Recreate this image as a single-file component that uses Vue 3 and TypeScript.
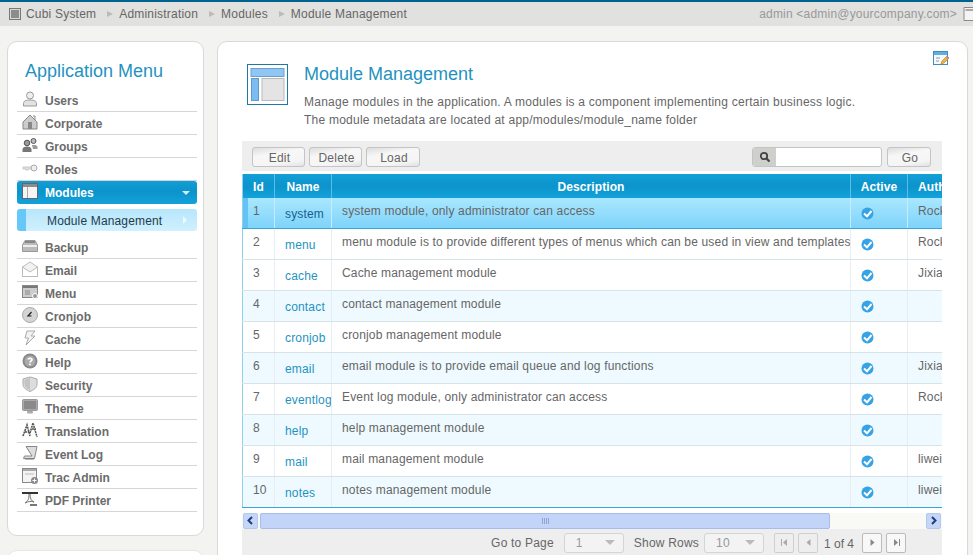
<template>
  <div class="page">
    <div class="topbar">
      <div class="crumbs">
        <svg class="crumb-icon" width="12" height="12" viewBox="0 0 12 12"><rect x="0.5" y="0.5" width="11" height="11" fill="#d8d8d8" stroke="#777" /><rect x="2" y="2" width="8" height="8" fill="#8c8c8c" /></svg>
        <template v-for="(c, i) in crumbs" :key="c">
          <span class="crumb-arrow" v-if="i > 0"></span>
          <span>{{ c }}</span>
        </template>
      </div>
      <div class="user">
        <span>admin &lt;admin@yourcompany.com&gt;</span>
        <svg class="user-icon" width="16" height="16" viewBox="0 0 16 16"><path d="M1 1.5h14v9l-4 4H1z" fill="#f4f4f4" stroke="#8a8a8a" /><path d="M2.500 4h11" stroke="#aaa" stroke-width="2" /><path d="M11 14l4-4" stroke="#666" /></svg>
      </div>
    </div>

    <div class="main">
      <aside class="side">
        <div class="card menu-card">
          <h2 class="menu-title">Application Menu</h2>
          <ul class="menu">
            <template v-for="m in menu" :key="m.label">
              <li class="menu-item" :class="{ active: m.active }">
                <svg class="menu-icon" width="16" height="16" viewBox="0 0 16 16" v-html="icons[m.icon]"></svg>
                <span>{{ m.label }}</span>
                <i class="caret" v-if="m.active"></i>
              </li>
              <li class="sub-item" v-if="m.active">
                <span>Module Management</span>
                <i class="sub-caret"></i>
              </li>
            </template>
          </ul>
        </div>
        <div class="card next-card"></div>
      </aside>

      <section class="card content">
        <svg class="edit-icon" width="16" height="16" viewBox="0 0 16 16">
          <rect x="0.500" y="0.500" width="14" height="13" fill="#f3f9fd" stroke="#3f8fbd" />
          <rect x="1" y="1" width="13" height="3" fill="#5fb0de" />
          <path d="M3 7h4M3 10h3" stroke="#8a9aa5" />
          <path d="M8 13l1-3 5-5 2 2-5 5z" fill="#f2b33d" stroke="#b97a18" stroke-width="0.600" />
          <path d="M13 6l2 2 1-1.500-1.500-1.500z" fill="#b07ac8" />
        </svg>

        <header class="head">
          <svg class="head-icon" width="41" height="41" viewBox="0 0 41 41">
            <rect x="0.500" y="0.500" width="40" height="40" fill="#fff" stroke="#1f79a6" />
            <rect x="4" y="4.500" width="33" height="8" fill="#8fc6f3" stroke="#6d9fc7" />
            <rect x="4.500" y="14.500" width="7" height="22" fill="#7dbcf2" stroke="#5f9ccd" />
            <rect x="15" y="14.500" width="22" height="22" fill="#e4e4e4" stroke="#b9b9b9" />
          </svg>
          <div>
            <h1 class="title">Module Management</h1>
            <p class="desc">Manage modules in the application. A modules is a component implementing certain business logic.<br />The module metadata are located at app/modules/module_name folder</p>
          </div>
        </header>

        <div class="grid-wrap">
          <div class="toolbar">
            <div class="btns">
              <button class="btn" v-for="b in ['Edit', 'Delete', 'Load']" :key="b">{{ b }}</button>
            </div>
            <div class="search">
              <div class="search-box">
                <span class="search-ico">
                  <svg width="12" height="12" viewBox="0 0 12 12"><circle cx="5" cy="5" r="3.200" fill="none" stroke="#444" stroke-width="1.800" /><path d="M7.500 7.500l3 3" stroke="#444" stroke-width="2.200" /></svg>
                </span>
              </div>
              <button class="btn go">Go</button>
            </div>
          </div>

          <table class="grid">
            <colgroup>
              <col style="width: 32px" /><col style="width: 57px" /><col style="width: 519px" /><col style="width: 57px" /><col style="width: 100px" />
            </colgroup>
            <thead>
              <tr>
                <th>Id</th><th>Name</th><th>Description</th><th>Active</th><th class="author-h">Author</th>
              </tr>
            </thead>
            <tbody>
              <tr v-for="r in rows" :key="r.id" :class="{ selected: r.id === 1, tint: r.tint }">
                <td>{{ r.id }}</td>
                <td class="name">{{ r.name }}</td>
                <td>{{ r.desc }}</td>
                <td class="active-cell">
                  <svg width="13" height="13" viewBox="0 0 13 13"><circle cx="6.500" cy="6.500" r="6" fill="#36a3e6" /><path d="M3 6.500l3 2.800 4.500-5.300" fill="none" stroke="#fff" stroke-width="2" /></svg>
                </td>
                <td>{{ r.author }}</td>
              </tr>
            </tbody>
          </table>

          <div class="hscroll">
            <span class="sb-btn"><svg width="9" height="9" viewBox="0 0 9 9"><path d="M6 1L2.500 4.500 6 8" fill="none" stroke="#1e3f7a" stroke-width="2" /></svg></span>
            <span class="sb-thumb"><i class="grip"></i></span>
            <span class="sb-btn"><svg width="9" height="9" viewBox="0 0 9 9"><path d="M3 1l3.500 3.500L3 8" fill="none" stroke="#1e3f7a" stroke-width="2" /></svg></span>
          </div>

          <div class="pager">
            <span class="lbl">Go to Page</span>
            <span class="sel"><b>1</b><i class="tri"></i></span>
            <span class="lbl rows-lbl">Show Rows</span>
            <span class="sel"><b>10</b><i class="tri"></i></span>
            <span class="pbtns">
              <button class="pb"><svg width="9" height="9" viewBox="0 0 9 9"><path d="M1.500 1v7" stroke="#aaa" /><path d="M7 1v7L3 4.500z" fill="#aaa" /></svg></button>
              <button class="pb"><svg width="9" height="9" viewBox="0 0 9 9"><path d="M6.500 1v7L2.500 4.500z" fill="#aaa" /></svg></button>
              <span class="of">1 of 4</span>
              <button class="pb on"><svg width="9" height="9" viewBox="0 0 9 9"><path d="M2.500 1v7l4-3.500z" fill="#888" /></svg></button>
              <button class="pb on"><svg width="9" height="9" viewBox="0 0 9 9"><path d="M2 1v7l4-3.500z" fill="#888" /><path d="M7.500 1v7" stroke="#888" /></svg></button>
            </span>
          </div>
        </div>
      </section>
    </div>
  </div>
</template>

<script setup lang="ts">
interface MenuItem {
  label: string
  icon: string
  active?: boolean
}

interface Row {
  id: number
  name: string
  desc: string
  author: string
  tint?: boolean
}

const crumbs = ['Cubi System', 'Administration', 'Modules', 'Module Management']

const menu: MenuItem[] = [
  { label: 'Users', icon: 'users' },
  { label: 'Corporate', icon: 'corporate' },
  { label: 'Groups', icon: 'groups' },
  { label: 'Roles', icon: 'roles' },
  { label: 'Modules', icon: 'modules', active: true },
  { label: 'Backup', icon: 'backup' },
  { label: 'Email', icon: 'email' },
  { label: 'Menu', icon: 'menu' },
  { label: 'Cronjob', icon: 'cronjob' },
  { label: 'Cache', icon: 'cache' },
  { label: 'Help', icon: 'help' },
  { label: 'Security', icon: 'security' },
  { label: 'Theme', icon: 'theme' },
  { label: 'Translation', icon: 'translation' },
  { label: 'Event Log', icon: 'eventlog' },
  { label: 'Trac Admin', icon: 'trac' },
  { label: 'PDF Printer', icon: 'pdf' },
]

// grey 16px glyphs for the side menu
const icons: Record<string, string> = {
  users: '<circle cx="8" cy="4.500" r="3.500" fill="#eee" stroke="#999"/><path d="M1.500 15v-2.500C1.500 10 4 9 8 9s6.500 1 6.500 3.500V15z" fill="#e2e2e2" stroke="#999"/>',
  corporate: '<path d="M8 1L1 8v7h14V8z" fill="#ccc" stroke="#888"/><rect x="6" y="8" width="4" height="7" fill="#888"/><path d="M11 2h2v4" fill="none" stroke="#888"/>',
  groups: '<circle cx="5" cy="6" r="2.800" fill="#999" stroke="#555"/><circle cx="11.500" cy="4" r="2.500" fill="#bbb" stroke="#555"/><path d="M0.500 15v-2.500C0.500 10.500 2.500 9.500 5 9.500s4.500 1 4.500 3V15z" fill="#777"/><path d="M10 8h3c1.500 0 2.500 1 2.500 2.500V12H11z" fill="#999"/>',
  roles: '<circle cx="12" cy="8" r="3" fill="#eee" stroke="#aaa"/><path d="M1 7h8v2H6v1H4V9H1z" fill="#e4e4e4" stroke="#bbb" stroke-width="0.800"/>',
  modules: '<rect x="0.500" y="0.500" width="15" height="15" fill="#f5f5f5" stroke="#666"/><rect x="1" y="1" width="14" height="3" fill="#8c8c8c"/><path d="M5.500 4v11" stroke="#aaa"/>',
  backup: '<path d="M0.500 7L3 2.500h10L15.500 7v6.500h-15z" fill="#bbb" stroke="#999"/><rect x="1" y="7" width="14" height="2" fill="#eee"/><rect x="3" y="3" width="10" height="2" fill="#888"/>',
  email: '<rect x="0.500" y="6" width="15" height="9.500" fill="#fff" stroke="#bbb"/><path d="M0.500 6L8 1l7.500 5L8 11z" fill="#f2f2f2" stroke="#bbb"/>',
  menu: '<rect x="0.500" y="1.500" width="15" height="12" fill="#ccc" stroke="#888"/><rect x="1" y="2" width="14" height="2" fill="#777"/><rect x="3" y="6" width="5" height="5" fill="#aaa"/><circle cx="13" cy="12" r="2.500" fill="#999" stroke="#fff"/>',
  cronjob: '<circle cx="8" cy="8" r="7.500" fill="#d4d4d4" stroke="#aaa"/><path d="M9.500 5L6 9h3.500" fill="none" stroke="#222" stroke-width="1.200"/>',
  cache: '<path d="M5 1h8l-4 5h4l-9 9 2.500-7H3z" fill="#f2f2f2" stroke="#aaa"/>',
  help: '<circle cx="8" cy="8" r="7.500" fill="#888"/><circle cx="8" cy="8" r="5.500" fill="#aaa"/><path d="M6 6.500C6 5 10 5 10 6.800 10 8 8 8 8 9.500" fill="none" stroke="#fff" stroke-width="1.600"/><rect x="7.200" y="10.600" width="1.600" height="1.600" fill="#fff"/>',
  security: '<path d="M8 1l7 2v5c0 4-3.500 6-7 7.500C4.500 14 1 12 1 8V3z" fill="#ddd" stroke="#aaa"/><path d="M8 2v12C5 13 2.500 11 2.500 8V4z" fill="#c4c4c4"/>',
  theme: '<rect x="0.500" y="0.500" width="15" height="11" rx="1" fill="#aaa" stroke="#999"/><rect x="2" y="2" width="12" height="8" fill="#8a8a8a"/><rect x="5" y="12" width="6" height="2.500" rx="1" fill="#aaa"/>',
  translation: '<path d="M1 14L5 3l3 11M3 10h4M8 11l3-10 4 14M10 7h4" fill="none" stroke="#555" stroke-width="1.600" stroke-dasharray="2 0.700"/>',
  eventlog: '<path d="M4 1.500h11l-2.500 12H1.500L2.500 11H10z" fill="#ddd" stroke="#888"/><path d="M3 14h9" stroke="#777"/>',
  trac: '<rect x="0.500" y="0.500" width="14" height="14" fill="#f4f4f4" stroke="#888"/><rect x="1" y="1" width="13" height="2" fill="#aaa"/><path d="M3 6h9" stroke="#bbb"/><circle cx="12.500" cy="12.500" r="3.500" fill="#888"/><path d="M10.500 12.500h4M12.500 10.500v4" stroke="#fff"/>',
  pdf: '<rect x="0" y="1" width="16" height="2" fill="#333"/><rect x="3" y="3" width="10" height="11" fill="#fafafa"/><path d="M7 3c0 5-1 7-4 9 4-2 6-2 9-1-3-1-4-4-4-8" fill="none" stroke="#777"/><rect x="8" y="13" width="7" height="2" fill="#777"/>',
}

const rows: Row[] = [
  { id: 1, name: 'system', desc: 'system module, only administrator can access', author: 'Rocky' },
  { id: 2, name: 'menu', desc: 'menu module is to provide different types of menus which can be used in view and templates', author: 'Rocky' },
  { id: 3, name: 'cache', desc: 'Cache management module', author: 'Jixian' },
  { id: 4, name: 'contact', desc: 'contact management module', author: '', tint: true },
  { id: 5, name: 'cronjob', desc: 'cronjob management module', author: '' },
  { id: 6, name: 'email', desc: 'email module is to provide email queue and log functions', author: 'Jixian', tint: true },
  { id: 7, name: 'eventlog', desc: 'Event log module, only administrator can access', author: 'Rocky' },
  { id: 8, name: 'help', desc: 'help management module', author: '', tint: true },
  { id: 9, name: 'mail', desc: 'mail management module', author: 'liwei' },
  { id: 10, name: 'notes', desc: 'notes management module', author: 'liwei', tint: true },
]
</script>

<style>
html, body {
  margin: 0;
  height: 100%;
  overflow: hidden;
  background: #f3f3f1;
}
</style>

<style scoped>
.page {
  height: 555px;
  overflow: hidden;
  font-family: "Liberation Sans", Arial, sans-serif;
  font-size: 12px;
  letter-spacing: 0.24px;
  color: #666;
}
.topbar {
  height: 24px;
  border-top: 2px solid #00628f;
  background: #e1e1df;
  display: flex;
  justify-content: space-between;
  align-items: center;
  padding-left: 9px;
  overflow: hidden;
  letter-spacing: 0.2px;
}
.crumbs {
  display: flex;
  align-items: center;
}
.crumb-icon { margin-right: 5px; }
.crumb-arrow {
  width: 0;
  height: 0;
  margin: 0 6px 0 11px;
  border-left: 6px solid #bbb;
  border-top: 3.500px solid transparent;
  border-bottom: 3.500px solid transparent;
}
.user {
  display: flex;
  align-items: center;
  gap: 6px;
  color: #999;
  margin-right: -6px;
}
.user-icon { flex: none; }

.main {
  display: flex;
  gap: 13px;
  padding: 15px 5px 0 7px;
}
.side {
  width: 197px;
  flex: none;
  display: flex;
  flex-direction: column;
  gap: 14px;
}
.card {
  background: #fff;
  border: 1px solid #d9d9d7;
  border-radius: 10px;
  box-sizing: border-box;
}
.menu-card {
  height: 495px;
  padding: 18px 6px 0 9px;
}
.next-card {
  height: 40px;
  border-color: #e6e6e4;
}
.menu-title {
  margin: 0 0 7px 8px;
  font-size: 18px;
  line-height: 22px;
  font-weight: 400;
  letter-spacing: 0;
  color: #1f93bf;
}
.menu {
  list-style: none;
  margin: 0;
  padding: 0;
}
.menu-item {
  height: 22px;
  border-bottom: 1px solid #d6d6d6;
  display: flex;
  align-items: center;
  padding-left: 5px;
  font-weight: 700;
  letter-spacing: 0;
  color: #6b6b6b;
  position: relative;
}
.menu-icon {
  flex: none;
  margin-right: 7px;
  margin-top: -3px;
}
.menu-item span { padding-top: 1px; }
.menu-item.active {
  height: 23px;
  border-bottom: 0;
  border-radius: 3px;
  color: #fff;
  background: linear-gradient(#129ed5, #0c93cb 45%, #14a2da);
}
.caret {
  position: absolute;
  right: 7px;
  top: 10px;
  border-top: 4px solid #cfeefc;
  border-left: 4px solid transparent;
  border-right: 4px solid transparent;
}
.sub-item {
  height: 22px;
  margin: 5px 0;
  box-sizing: border-box;
  display: flex;
  align-items: center;
  padding: 1px 0 0 21px;
  letter-spacing: 0.15px;
  color: #1f3b4d;
  border-left: 9px solid #65c8f8;
  border-radius: 3px;
  background: linear-gradient(#b7e6fb, #d0f1fe);
  position: relative;
}
.sub-caret {
  position: absolute;
  right: 10px;
  top: 7px;
  border-left: 4px solid #eafaff;
  border-top: 4px solid transparent;
  border-bottom: 4px solid transparent;
}

.content {
  flex: 1;
  height: 600px;
  position: relative;
  padding: 22px 0 0 24px;
}
.edit-icon {
  position: absolute;
  top: 9px;
  right: 18px;
}
.head {
  display: flex;
  gap: 16px;
  padding: 0 0 0 5px;
  height: 77px;
}
.head-icon { flex: none; }
.title {
  margin: -1px 0 8px;
  font-size: 18px;
  line-height: 22px;
  font-weight: 400;
  letter-spacing: 0;
  color: #1f93bf;
}
.desc {
  margin: 0;
  line-height: 18px;
}
.grid-wrap {
  width: 700px;
  overflow: hidden;
}
.toolbar {
  height: 30px;
  box-sizing: border-box;
  background: #eee;
  display: flex;
  justify-content: space-between;
  align-items: center;
  padding: 2px 11px 0 10px;
}
.btns, .search {
  display: flex;
  gap: 4px;
}
.search { gap: 5px; }
.btn {
  width: 53px;
  height: 20px;
  padding: 1px 0 0 2px;
  border: 1px solid #c4c4c4;
  border-radius: 3px;
  background: linear-gradient(170deg, #ddd 0, #f7f7f7 35%, #f5f5f5 75%, #e2e2e2);
  font: inherit;
  letter-spacing: inherit;
  color: #666;
}
.btn:last-child { width: 54px; }
.btn.go { width: 44px; }
.search-box {
  width: 130px;
  height: 20px;
  box-sizing: border-box;
  border: 1px solid #c4c4c4;
  border-radius: 3px;
  background: #fff;
  overflow: hidden;
}
.search-ico {
  display: flex;
  align-items: center;
  justify-content: center;
  width: 23px;
  height: 100%;
  background: #cfcfcb;
}

.grid {
  margin-top: 3px;
  width: 765px;
  table-layout: fixed;
  border-collapse: collapse;
  border-left: 1px solid #8fd0ea;
}
.grid th {
  height: 24px;
  padding: 1px 0 0;
  box-sizing: border-box;
  color: #fff;
  font-weight: 700;
  letter-spacing: 0.1px;
  background: linear-gradient(#12a0d7, #0c93cb 50%, #13a2da);
  border-right: 1px solid #5cbde6;
  text-align: center;
}
.grid .author-h {
  text-align: left;
  padding-left: 10px;
}
.grid td {
  height: 31px;
  box-sizing: border-box;
  padding: 6px 0 0 10px;
  vertical-align: top;
  letter-spacing: 0.17px;
  border-right: 1px solid #e7eef1;
  border-bottom: 1px solid #d8e3e8;
  white-space: nowrap;
  overflow: hidden;
}
.grid .name {
  padding: 9px 0 0 10px;
  color: #1f93bf;
}
.grid .active-cell { padding: 9px 0 0 10px; }
.active-cell svg { display: block; }
.tint td { background: #eefaff; }
.grid .selected td {
  height: 30px;
  background: linear-gradient(#a9e7ff, #7ed3fa);
  border-bottom-color: #3ba5d4;
  border-right-color: #c6ecfb;
}
.selected td:first-child {
  box-shadow: inset 5px 0 0 #63c3f4;
}
.grid .selected .name { color: #14628f; }
.grid tbody tr:last-child td { border-bottom-color: #3ba5d4; }

.hscroll {
  display: flex;
  align-items: center;
  margin-top: 5px;
  height: 16px;
  padding: 0 1px;
  background: #f9f9f5;
}
.sb-btn {
  width: 15px;
  height: 16px;
  box-sizing: border-box;
  display: flex;
  align-items: center;
  justify-content: center;
  border: 1px solid #b4c8ea;
  border-radius: 2px;
  background: #c5d7f8;
  flex: none;
}
.sb-thumb {
  width: 570px;
  height: 16px;
  box-sizing: border-box;
  margin: 0 auto 0 2px;
  border: 1px solid #a8bde6;
  border-radius: 2px;
  background: #c2d5f8;
  display: flex;
  align-items: center;
  justify-content: center;
}
.grip {
  width: 7px;
  height: 6px;
  background: repeating-linear-gradient(90deg, #8ea5d4 0 1px, transparent 1px 2px);
}
.pager {
  height: 40px;
  padding: 4px 36px 0 0;
  box-sizing: border-box;
  background: #eee;
  display: flex;
  justify-content: flex-end;
  gap: 10px;
  align-items: flex-start;
}
.lbl {
  line-height: 20px;
  letter-spacing: 0.2px;
}
.rows-lbl { margin-right: -5px; }
.sel {
  width: 60px;
  height: 20px;
  box-sizing: border-box;
  border: 1px solid #d4d4d4;
  border-radius: 3px;
  background: #f3f3f3;
  display: flex;
  justify-content: space-between;
  align-items: center;
  padding: 0 8px 0 11px;
}
.sel b {
  font-weight: 400;
  color: #999;
}
.tri {
  border-top: 5px solid #bbb;
  border-left: 5px solid transparent;
  border-right: 5px solid transparent;
}
.pbtns {
  display: flex;
  align-items: center;
  gap: 4px;
}
.pb {
  width: 20px;
  height: 20px;
  padding: 0;
  box-sizing: border-box;
  border: 1px solid #cfcfcf;
  border-radius: 2px;
  background: #eee;
  display: flex;
  align-items: center;
  justify-content: center;
}
.pb.on {
  border-color: #bbb;
  background: #f8f8f8;
}
.of {
  margin: 2px 4px 0 2px;
  letter-spacing: 0;
  width: 30px;
  white-space: nowrap;
}
</style>
